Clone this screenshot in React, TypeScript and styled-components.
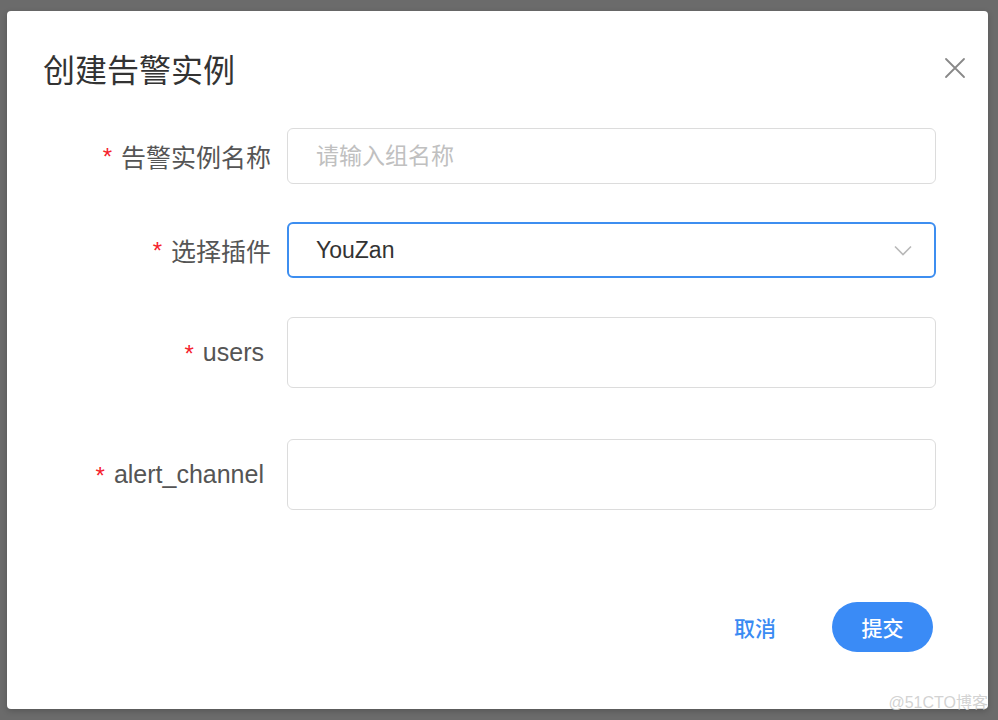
import React from "react";
import styled, { createGlobalStyle } from "styled-components";

const GlobalStyle = createGlobalStyle`
  html, body {
    margin: 0;
    padding: 0;
    background: #6b6b6b;
  }
  body {
    font-family: "Liberation Sans", "Noto Sans CJK SC", sans-serif;
  }
`;

const Backdrop = styled.div`
  position: relative;
  width: 998px;
  height: 720px;
  box-sizing: border-box;
  padding: 11px 10px 11px 7px;
  background: #6b6b6b;
`;

const Dialog = styled.div`
  display: flex;
  flex-direction: column;
  width: 981px;
  height: 698px;
  box-sizing: border-box;
  background: #fff;
  border-radius: 4px;
  box-shadow: 0 2px 6px rgba(0, 0, 0, 0.2);
`;

const Header = styled.div`
  display: flex;
  align-items: center;
  justify-content: space-between;
  height: 41px;
  padding: 36px 21px 0 36px;
`;

const Title = styled.h1`
  margin: 0;
  font-size: 32px;
  font-weight: 400;
  color: #333;
  font-family: "Noto Sans CJK SC", "Liberation Sans", sans-serif;
`;

const CloseButton = styled.button`
  display: flex;
  align-items: center;
  justify-content: center;
  width: 24px;
  height: 24px;
  padding: 0;
  border: none;
  background: transparent;
  cursor: pointer;
`;

const Form = styled.div`
  display: flex;
  flex-direction: column;
  padding: 0 52px 0 0;
  margin-top: 40px;
`;

const Row = styled.div<{ $gap: number }>`
  display: grid;
  grid-template-columns: 264px 1fr;
  column-gap: 16px;
  align-items: center;
  margin-bottom: ${({ $gap }) => $gap}px;
`;

const Label = styled.label<{ $latin?: boolean }>`
  display: flex;
  justify-content: flex-end;
  align-items: center;
  font-size: 25px;
  color: #555;
  padding-right: ${({ $latin }) => ($latin ? 7 : 0)}px;
  font-family: ${({ $latin }) =>
    $latin
      ? `"Liberation Sans", "Noto Sans CJK SC", sans-serif`
      : `"Noto Sans CJK SC", "Liberation Sans", sans-serif`};
`;

const Star = styled.span`
  color: #f5222d;
  font-family: "Liberation Sans", sans-serif;
  font-size: 24px;
  margin-right: 9px;
  position: relative;
  top: 1px;
`;

const Field = styled.div<{ $height: number; $focused?: boolean }>`
  display: flex;
  align-items: center;
  justify-content: space-between;
  height: ${({ $height }) => $height}px;
  box-sizing: border-box;
  padding: 0 22px 0 ${({ $focused }) => ($focused ? 27 : 28)}px;
  border: ${({ $focused }) =>
    $focused ? "2px solid #3d8ef0" : "1.5px solid #dcdcdc"};
  border-radius: 6px;
  background: #fff;
`;

const Input = styled.input`
  flex: 1;
  border: none;
  outline: none;
  padding: 0;
  font-size: 23px;
  color: #333;
  background: transparent;
  font-family: "Liberation Sans", "Noto Sans CJK SC", sans-serif;

  &::placeholder {
    color: #c0c0c0;
    font-family: "Noto Sans CJK SC", sans-serif;
  }
`;

const SelectValue = styled.span`
  font-size: 23px;
  color: #333;
`;

const Footer = styled.div`
  display: flex;
  justify-content: flex-end;
  align-items: center;
  margin-top: auto;
  padding: 0 55px 57px 0;
`;

const TextButton = styled.button`
  border: none;
  background: transparent;
  padding: 0;
  margin-right: 56px;
  font-size: 21px;
  font-weight: 500;
  color: #3a8bf3;
  font-family: "Noto Sans CJK SC", sans-serif;
  cursor: pointer;
`;

const PrimaryButton = styled.button`
  width: 101px;
  height: 50px;
  border: none;
  border-radius: 25px;
  background: #3a8bf6;
  color: #fff;
  font-size: 21px;
  font-weight: 500;
  font-family: "Noto Sans CJK SC", sans-serif;
  cursor: pointer;
`;

const Watermark = styled.div`
  position: absolute;
  right: 10px;
  bottom: 7px;
  font-size: 16px;
  color: rgba(205, 205, 205, 0.9);
  font-family: "Liberation Sans", "Noto Sans CJK SC", sans-serif;
`;

const CloseIcon = () => (
  <svg width="22" height="22" viewBox="0 0 22 22">
    <path d="M2 2 L20 20 M20 2 L2 20" stroke="#888" strokeWidth="1.8" strokeLinecap="round" />
  </svg>
);

const Chevron = () => (
  <svg width="18" height="11" viewBox="0 0 18 11">
    <path d="M1 1.5 L9 9.5 L17 1.5" stroke="#b8b8b8" strokeWidth="1.6" fill="none" />
  </svg>
);

const App: React.FC = () => (
  <>
    <GlobalStyle />
    <Backdrop>
      <Dialog>
        <Header>
          <Title>创建告警实例</Title>
          <CloseButton aria-label="close">
            <CloseIcon />
          </CloseButton>
        </Header>
        <Form>
          <Row $gap={38}>
            <Label>
              <Star>*</Star>告警实例名称
            </Label>
            <Field $height={56}>
              <Input placeholder="请输入组名称" />
            </Field>
          </Row>
          <Row $gap={39}>
            <Label>
              <Star>*</Star>选择插件
            </Label>
            <Field $height={56} $focused>
              <SelectValue>YouZan</SelectValue>
              <Chevron />
            </Field>
          </Row>
          <Row $gap={51}>
            <Label $latin>
              <Star>*</Star>users
            </Label>
            <Field $height={71}>
              <Input />
            </Field>
          </Row>
          <Row $gap={0}>
            <Label $latin>
              <Star>*</Star>alert_channel
            </Label>
            <Field $height={71}>
              <Input />
            </Field>
          </Row>
        </Form>
        <Footer>
          <TextButton>取消</TextButton>
          <PrimaryButton>提交</PrimaryButton>
        </Footer>
      </Dialog>
      <Watermark>@51CTO博客</Watermark>
    </Backdrop>
  </>
);

export default App;
